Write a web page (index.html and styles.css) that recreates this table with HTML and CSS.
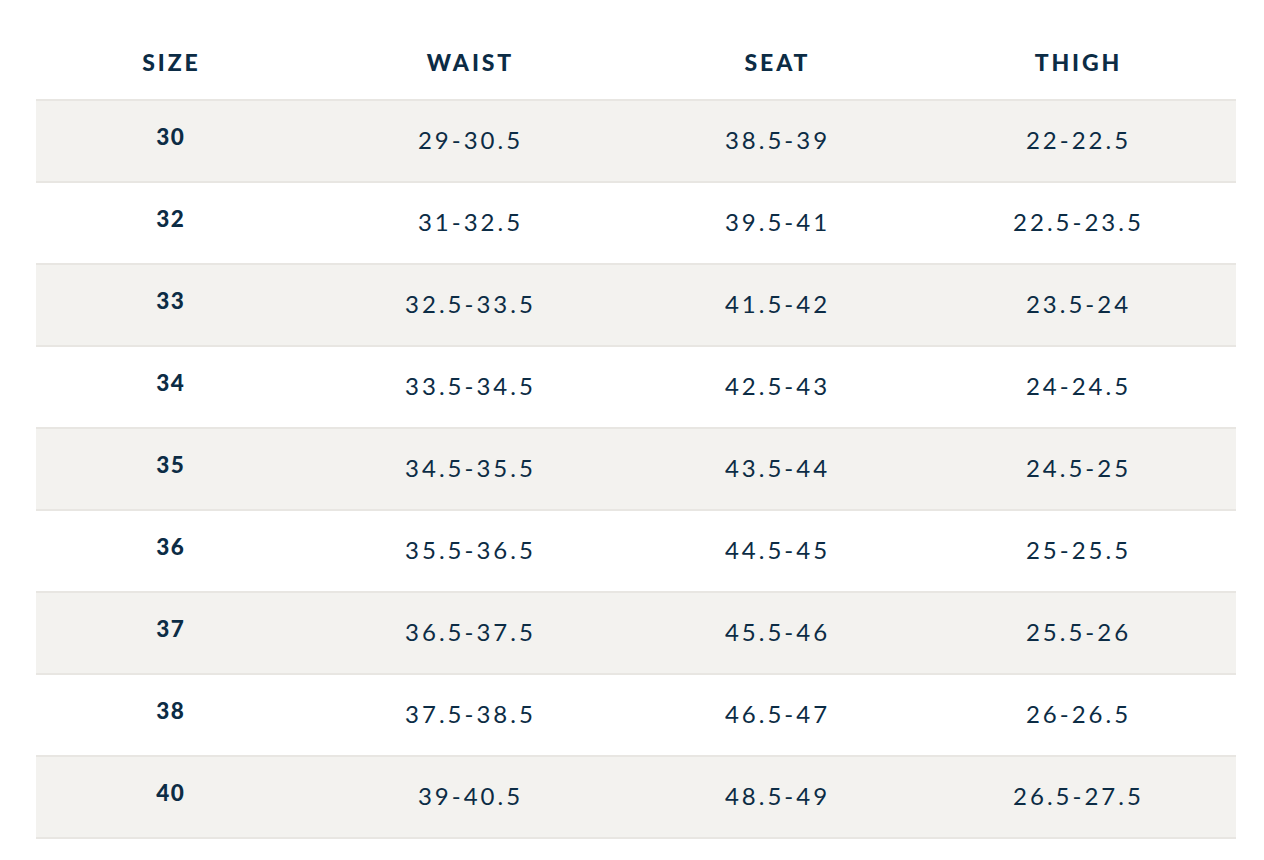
FILE: index.html
```html
<!DOCTYPE html>
<html>
<head>
<meta charset="utf-8">
<link rel="stylesheet" href="styles.css">
</head>
<body>
<table class="sizes">
  <colgroup>
    <col class="c1"><col class="c2"><col class="c3"><col class="c4">
  </colgroup>
  <thead>
    <tr><th>SIZE</th><th>WAIST</th><th>SEAT</th><th>THIGH</th></tr>
  </thead>
  <tbody>
    <tr class="alt"><td class="size">30</td><td>29-30.5</td><td>38.5-39</td><td>22-22.5</td></tr>
    <tr><td class="size">32</td><td>31-32.5</td><td>39.5-41</td><td>22.5-23.5</td></tr>
    <tr class="alt"><td class="size">33</td><td>32.5-33.5</td><td>41.5-42</td><td>23.5-24</td></tr>
    <tr><td class="size">34</td><td>33.5-34.5</td><td>42.5-43</td><td>24-24.5</td></tr>
    <tr class="alt"><td class="size">35</td><td>34.5-35.5</td><td>43.5-44</td><td>24.5-25</td></tr>
    <tr><td class="size">36</td><td>35.5-36.5</td><td>44.5-45</td><td>25-25.5</td></tr>
    <tr class="alt"><td class="size">37</td><td>36.5-37.5</td><td>45.5-46</td><td>25.5-26</td></tr>
    <tr><td class="size">38</td><td>37.5-38.5</td><td>46.5-47</td><td>26-26.5</td></tr>
    <tr class="alt"><td class="size">40</td><td>39-40.5</td><td>48.5-49</td><td>26.5-27.5</td></tr>
  </tbody>
</table>
</body>
</html>
```
FILE: styles.css
```css
html, body {
  margin: 0;
  padding: 0;
  background: #ffffff;
}
body {
  padding: 0 28px 0 36px;
  font-family: "Lato", "Liberation Sans", sans-serif;
  color: #0c2c45;
}
.sizes {
  width: 1200px;
  border-collapse: collapse;
  table-layout: fixed;
}
.c1 { width: 268px; }
.c2 { width: 330px; }
.c3 { width: 284px; }
.c4 { width: 318px; }
.sizes th {
  box-sizing: border-box;
  height: 100px;
  padding: 24px 0 0 0;
  font-size: 23px;
  font-weight: 900;
  letter-spacing: 2.9px;
  text-indent: 2.9px;
  text-align: center;
  vertical-align: middle;
  border-bottom: 2px solid #e8e6e2;
}
.sizes td {
  box-sizing: border-box;
  height: 82px;
  padding: 0 0 3px 0;
  font-size: 24px;
  font-weight: 400;
  letter-spacing: 3px;
  text-indent: 3px;
  text-align: center;
  vertical-align: middle;
  border-bottom: 2px solid #e8e6e2;
}
.sizes td.size {
  font-size: 22.5px;
  font-weight: 900;
  letter-spacing: 1.6px;
  text-indent: 1.6px;
  padding-bottom: 10px;
}
.sizes tr.alt td {
  background: #f3f2ef;
}
```
